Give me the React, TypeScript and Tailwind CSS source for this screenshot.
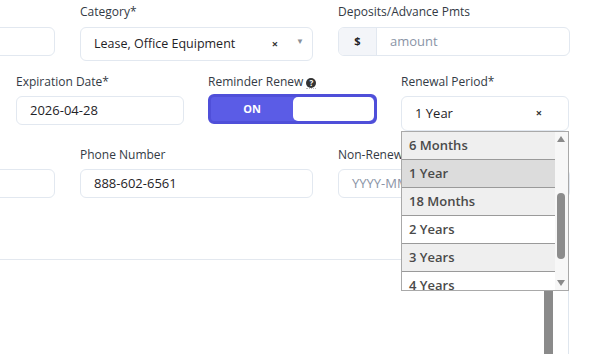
import React from "react";

const font = { fontFamily: '"Open Sans", "Noto Sans", sans-serif' };

function Label({ children }: { children: React.ReactNode }) {
  return <div className="text-[12px] leading-[16px] text-[#333a45] whitespace-nowrap">{children}</div>;
}

function Input({ value, placeholder, h = "h-[29px]" }: { value?: string; placeholder?: string; h?: string }) {
  return (
    <div className={`${h} w-full rounded-[6px] border border-[#e2e8f0] bg-white flex items-center px-[13px] text-[13px] text-[#1f2327] overflow-hidden whitespace-nowrap`}>
      {value ? value : <span className="text-[#8a94a6]">{placeholder}</span>}
    </div>
  );
}

const items = [
  { t: "6 Months", bg: "bg-[#efefef]" },
  { t: "1 Year", bg: "bg-[#dcdcdc]" },
  { t: "18 Months", bg: "bg-[#efefef]" },
  { t: "2 Years", bg: "bg-white" },
  { t: "3 Years", bg: "bg-[#efefef]" },
  { t: "4 Years", bg: "bg-white" },
];

export default function App() {
  return (
    <div className="relative w-[601px] h-[354px] overflow-hidden bg-white" style={font}>
      {/* Row 1 */}
      <div className="flex gap-[25px] ml-[-177px] pt-[4px]">
        <div className="w-[232px] flex flex-col gap-[7px]">
          <Label>&nbsp;</Label>
          <Input value="" placeholder="" h="h-[29px]" />
        </div>
        <div className="w-[233px] flex flex-col gap-[7px]">
          <Label>Category*</Label>
          <div className="h-[34px] rounded-[6px] border border-[#e2e8f0] bg-white flex items-center pl-[13px] pr-[8px] text-[12.5px] text-[#1f2327]">
            <span className="flex-1 whitespace-nowrap">Lease, Office Equipment</span>
            <span className="text-[11px] font-bold text-[#333] mr-[18px]">×</span>
            <span className="text-[8px] text-[#8a8f99] mb-[6px]">▼</span>
          </div>
        </div>
        <div className="w-[232px] flex flex-col gap-[7px]">
          <Label>Deposits/Advance Pmts</Label>
          <div className="h-[29px] rounded-[6px] border border-[#e2e8f0] bg-white flex overflow-hidden">
            <div className="w-[38px] bg-[#f3f5f9] border-r border-[#e2e8f0] flex items-center justify-center text-[11px] font-bold text-[#1f2327]">$</div>
            <div className="flex items-center pl-[13px] text-[13px] text-[#8a94a6]">amount</div>
          </div>
        </div>
      </div>

      {/* Row 2 */}
      <div className="flex gap-[24px] ml-[-176px] mt-[13px]">
        <div className="w-[168px] flex flex-col gap-[6px]">
          <Label>&nbsp;</Label>
          <Input value="" />
        </div>
        <div className="w-[168px] flex flex-col gap-[6px]">
          <Label>Expiration Date*</Label>
          <Input value="2026-04-28" />
        </div>
        <div className="w-[169px] flex flex-col gap-[4px]">
          <Label>
            <span>Reminder Renew </span>
            <span className="relative inline-block border-b border-dotted border-[#bbb] leading-[12px]">
              <span className="inline-flex items-center justify-center w-[10px] h-[10px] rounded-full bg-[#333] text-white text-[8px] font-bold leading-none">?</span>
            </span>
          </Label>
          <div className="h-[30px] rounded-[6px] bg-[#5b5ce6] border-[3px] border-[#4f4fd9] flex items-stretch">
            <div className="flex-1 flex items-center justify-center text-white text-[11px] font-bold">ON</div>
            <div className="w-[81px] bg-white rounded-[5px]"></div>
          </div>
        </div>
        <div className="w-[168px] flex flex-col gap-[6px] relative">
          <Label>Renewal Period*</Label>
          <div className="h-[35px] rounded-[6px] border border-[#e2e8f0] bg-white flex items-center pl-[13px] pr-[26px] text-[13px] text-[#1f2327]">
            <span className="flex-1">1 Year</span>
            <span className="text-[11px] font-bold text-[#333]">×</span>
          </div>
        </div>
      </div>

      {/* Row 3 */}
      <div className="flex gap-[25px] ml-[-177px] mt-[16px]">
        <div className="w-[232px] flex flex-col gap-[6px]">
          <Label>&nbsp;</Label>
          <Input value="" />
        </div>
        <div className="w-[233px] flex flex-col gap-[6px]">
          <Label>Phone Number</Label>
          <Input value="888-602-6561" />
        </div>
        <div className="w-[232px] flex flex-col gap-[6px]">
          <Label>Non-Renew</Label>
          <Input placeholder="YYYY-MM-DD" />
        </div>
      </div>

      {/* Divider */}
      <div className="mt-[61px] w-[568px] border-t border-[#e3e8ef]"></div>
      <div className="ml-[568px] w-px h-[100px] bg-[#dfe6ee]"></div>

      {/* Gray bar below dropdown */}
      <div className="absolute left-[544px] top-[291px] w-[9px] h-[63px] bg-[#8a8a8a]"></div>

      {/* Dropdown list */}
      <div className="absolute left-[401px] top-[131px] w-[168px] h-[160px] border border-[#a9a9a9] bg-white flex overflow-hidden">
        <div className="flex-1 flex flex-col">
          {items.map((it) => (
            <div key={it.t} className={`h-[28px] shrink-0 ${it.bg} border-b border-[#9a9a9a] flex items-center pl-[7px] text-[13px] font-semibold text-[#4a4a4a]`}>
              {it.t}
            </div>
          ))}
        </div>
        <div className="w-[13px] bg-[#f7f7f7] relative">
          <div className="absolute left-[2px] top-[4px] w-0 h-0 border-l-[4.5px] border-r-[4.5px] border-b-[6px] border-l-transparent border-r-transparent border-b-[#8a8a8a]"></div>
          <div className="absolute left-[2px] top-[61px] w-[8px] h-[66px] rounded-[4px] bg-[#8c8c8c]"></div>
          <div className="absolute left-[2px] top-[148px] w-0 h-0 border-l-[4.5px] border-r-[4.5px] border-t-[6px] border-l-transparent border-r-transparent border-t-[#8a8a8a]"></div>
        </div>
      </div>
    </div>
  );
}
